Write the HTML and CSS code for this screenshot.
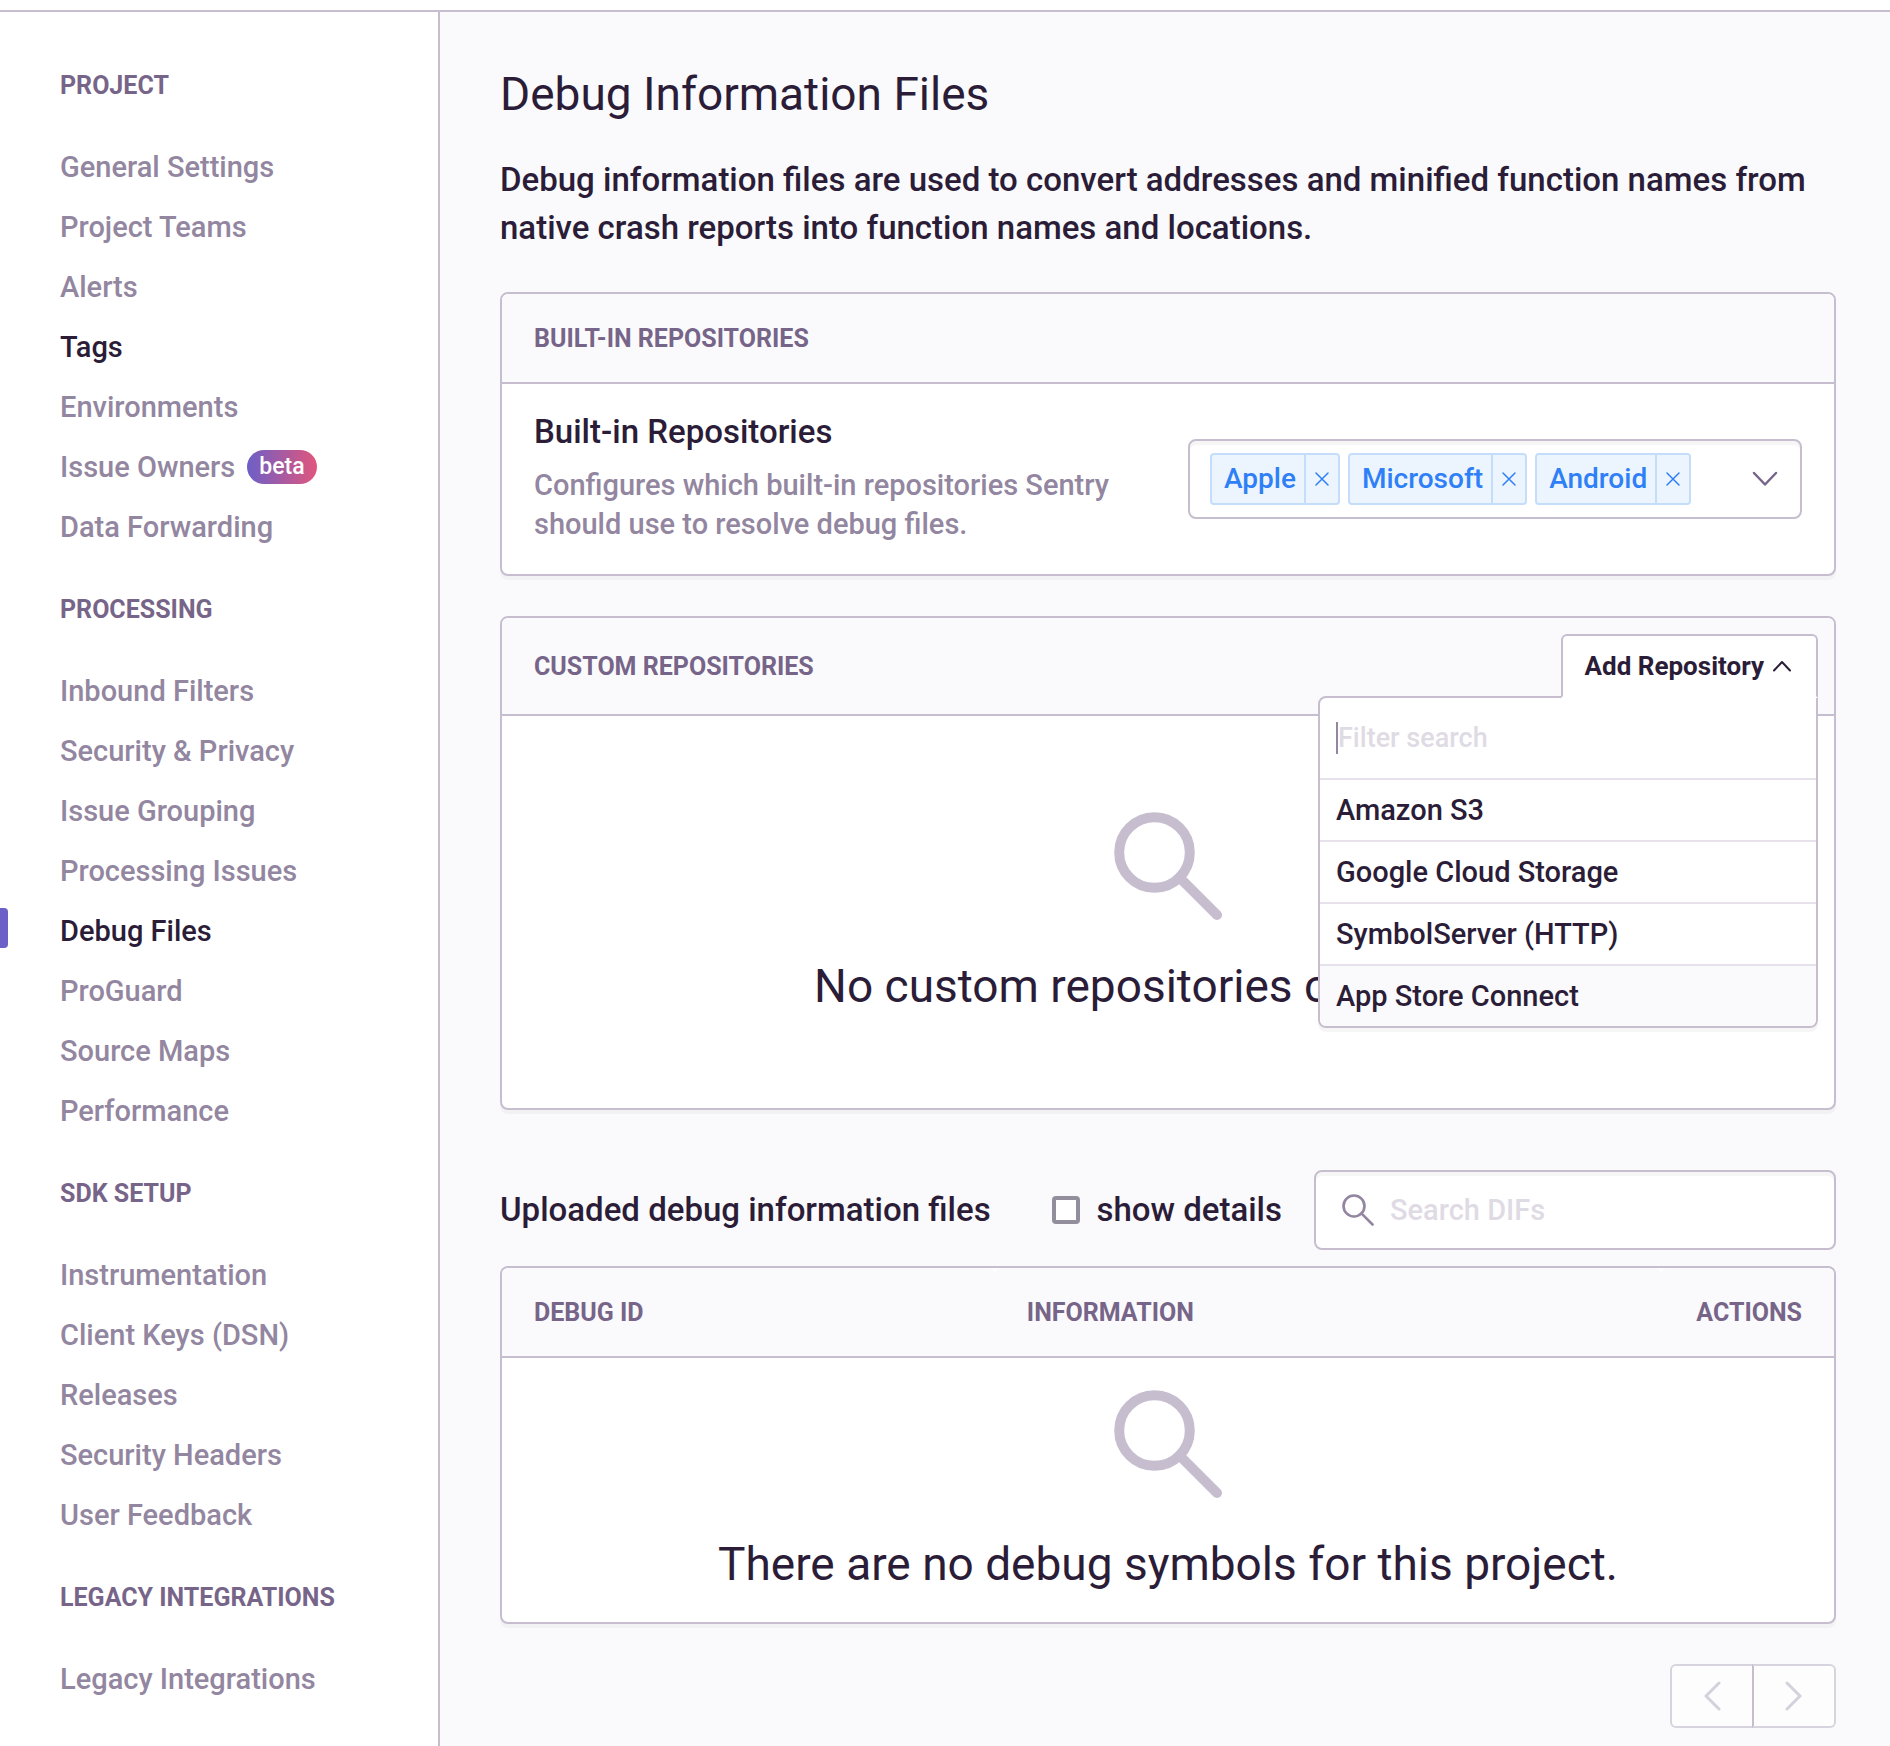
FILE: index.html
```html
<!DOCTYPE html>
<html lang="en">
<head>
<meta charset="utf-8">
<meta name="viewport" content="width=device-width, initial-scale=1">
<title>Debug Information Files</title>
<link rel="stylesheet" href="styles.css">
</head>
<body>
<svg class="sprite" aria-hidden="true">
  <symbol id="icon-search" viewBox="0 0 108 108">
    <circle cx="40.5" cy="40.5" r="35.3"/>
    <path d="M65.500 65.500L103 103"/>
  </symbol>
  <symbol id="icon-close" viewBox="0 0 14 14"><path d="M1 1L13 13M13 1L1 13"/></symbol>
</svg>
<header class="topbar"></header>
<div class="layout">
  <nav class="sidebar" aria-label="Project settings">
    <h2 class="nav-heading">Project</h2>
    <ul class="nav-list">
      <li><a class="nav-link" href="#">General Settings</a></li>
      <li><a class="nav-link" href="#">Project Teams</a></li>
      <li><a class="nav-link" href="#">Alerts</a></li>
      <li><a class="nav-link nav-link-dark" href="#">Tags</a></li>
      <li><a class="nav-link" href="#">Environments</a></li>
      <li><a class="nav-link" href="#">Issue Owners <span class="badge">beta</span></a></li>
      <li><a class="nav-link" href="#">Data Forwarding</a></li>
    </ul>
    <h2 class="nav-heading">Processing</h2>
    <ul class="nav-list">
      <li><a class="nav-link" href="#">Inbound Filters</a></li>
      <li><a class="nav-link" href="#">Security &amp; Privacy</a></li>
      <li><a class="nav-link" href="#">Issue Grouping</a></li>
      <li><a class="nav-link" href="#">Processing Issues</a></li>
      <li><a class="nav-link nav-link-dark nav-link-active" href="#" aria-current="page">Debug Files</a></li>
      <li><a class="nav-link" href="#">ProGuard</a></li>
      <li><a class="nav-link" href="#">Source Maps</a></li>
      <li><a class="nav-link" href="#">Performance</a></li>
    </ul>
    <h2 class="nav-heading">SDK Setup</h2>
    <ul class="nav-list">
      <li><a class="nav-link" href="#">Instrumentation</a></li>
      <li><a class="nav-link" href="#">Client Keys (DSN)</a></li>
      <li><a class="nav-link" href="#">Releases</a></li>
      <li><a class="nav-link" href="#">Security Headers</a></li>
      <li><a class="nav-link" href="#">User Feedback</a></li>
    </ul>
    <h2 class="nav-heading">Legacy Integrations</h2>
    <ul class="nav-list">
      <li><a class="nav-link" href="#">Legacy Integrations</a></li>
    </ul>
  </nav>

  <main class="content">
    <h1 class="title">Debug Information Files</h1>
    <p class="intro">Debug information files are used to convert addresses and minified function names from native crash reports into function names and locations.</p>

    <section class="panel">
      <h2 class="panel-header">Built-in Repositories</h2>
      <div class="field">
        <div class="field-text">
          <h3 class="field-label" id="builtin-label">Built-in Repositories</h3>
          <p class="field-help">Configures which built-in repositories Sentry should use to resolve debug files.</p>
        </div>
        <div class="multiselect" role="group" aria-labelledby="builtin-label">
          <ul class="tags">
            <li class="tag"><span class="tag-label">Apple</span><button class="tag-remove" type="button" aria-label="Remove Apple"><svg class="icon-x"><use href="#icon-close"/></svg></button></li>
            <li class="tag"><span class="tag-label">Microsoft</span><button class="tag-remove" type="button" aria-label="Remove Microsoft"><svg class="icon-x"><use href="#icon-close"/></svg></button></li>
            <li class="tag"><span class="tag-label">Android</span><button class="tag-remove" type="button" aria-label="Remove Android"><svg class="icon-x"><use href="#icon-close"/></svg></button></li>
          </ul>
          <button class="select-toggle" type="button" aria-label="Show repositories"><svg class="icon-down" viewBox="0 0 26 16"><path d="M2 2L13 13.500L24 2"/></svg></button>
        </div>
      </div>
    </section>

    <section class="panel">
      <div class="panel-header panel-header-actions">
        <h2 class="panel-title">Custom Repositories</h2>
        <div class="dropdown">
          <button class="dropdown-button" type="button" aria-expanded="true">Add Repository <svg class="icon-up" viewBox="0 0 20 12"><path d="M2 10.500L10 2L18 10.500"/></svg></button>
          <div class="menu">
            <div class="menu-search"><input class="menu-input" type="text" placeholder="Filter search" aria-label="Filter search"></div>
            <button class="menu-item" type="button">Amazon S3</button>
            <button class="menu-item" type="button">Google Cloud Storage</button>
            <button class="menu-item" type="button">SymbolServer (HTTP)</button>
            <button class="menu-item menu-item-hover" type="button">App Store Connect</button>
          </div>
        </div>
      </div>
      <div class="empty empty-tall">
        <svg class="icon-empty"><use href="#icon-search"/></svg>
        <p class="empty-text">No custom repositories configured</p>
      </div>
    </section>

    <div class="toolbar">
      <h2 class="toolbar-title">Uploaded debug information files</h2>
      <label class="check"><input class="checkbox" type="checkbox">show details</label>
      <label class="search">
        <svg class="icon-search"><use href="#icon-search"/></svg>
        <input class="search-input" type="text" placeholder="Search DIFs" aria-label="Search DIFs">
      </label>
    </div>

    <div class="panel panel-table">
      <table class="table">
        <thead>
          <tr><th class="col-id" scope="col">Debug ID</th><th class="col-info" scope="col">Information</th><th class="col-actions" scope="col">Actions</th></tr>
        </thead>
        <tbody>
          <tr><td colspan="3">
            <div class="empty">
              <svg class="icon-empty"><use href="#icon-search"/></svg>
              <p class="empty-text">There are no debug symbols for this project.</p>
            </div>
          </td></tr>
        </tbody>
      </table>
    </div>

    <div class="pager">
      <button class="pager-button" type="button" aria-label="Previous" disabled><svg class="icon-page" viewBox="0 0 18 30"><path d="M16 2L3 15L16 28"/></svg></button>
      <button class="pager-button" type="button" aria-label="Next" disabled><svg class="icon-page" viewBox="0 0 18 30"><path d="M2 2L15 15L2 28"/></svg></button>
    </div>
  </main>
</div>
</body>
</html>
```

FILE: styles.css
```css
:root {
  --text: #2b1d38;
  --muted: #9386a0;
  --heading: #776589;
  --border: #c6becf;
  --border-light: #e7e1ec;
  --surface: #fafafc;
  --placeholder: #dfdbe4;
  --accent: #6c5fc7;
  --tag-border: #c3ddfb;
}

* { box-sizing: border-box; }

body {
  margin: 0;
  background: #fff;
  color: var(--text);
  font-family: Roboto, "Liberation Sans", sans-serif;
  font-size: 29px;
  font-weight: 500;
  line-height: 40px;
}

h1, h2, h3, p, ul { margin: 0; padding: 0; font-weight: 500; }
ul { list-style: none; }
button, input { font: inherit; color: inherit; margin: 0; }
button { cursor: pointer; }
svg { display: block; fill: none; stroke-linecap: round; stroke-linejoin: round; }
.sprite { position: absolute; width: 0; height: 0; }

.topbar { height: 12px; border-bottom: 2px solid var(--border); }
.layout { display: flex; min-height: calc(100vh - 12px); }

/* Sidebar */
.sidebar {
  flex: none;
  width: 440px;
  padding-top: 21px;
  border-right: 2px solid var(--border);
}
.nav-heading {
  padding: 33px 60px 31px;
  color: var(--heading);
  font-size: 25px;
  font-weight: 700;
  text-transform: uppercase;
}
.nav-link {
  position: relative;
  display: flex;
  align-items: center;
  gap: 12px;
  height: 60px;
  padding: 0 60px;
  color: var(--muted);
  text-decoration: none;
}
.nav-link-dark { color: var(--text); }
.nav-link-active::before {
  content: "";
  position: absolute;
  left: 0;
  top: 7px;
  width: 8px;
  height: 40px;
  border-radius: 0 4px 4px 0;
  background: var(--accent);
}
.badge {
  padding: 0 12px;
  border-radius: 17px;
  background: linear-gradient(90deg, #6c5fc7, #e1567c);
  color: #fff;
  font-size: 23px;
  line-height: 34px;
}

/* Content */
.content {
  flex: 1;
  min-width: 0;
  padding: 56px 54px 16px 60px;
  background: var(--surface);
}
.title { font-size: 46px; font-weight: 400; line-height: 52px; }
.intro { margin: 36px 0 40px; font-size: 33px; line-height: 48px; }

.panel {
  margin-bottom: 40px;
  border: 2px solid var(--border);
  border-radius: 8px;
  background: #fff;
  box-shadow: 0 4px 0 rgba(43, 29, 56, 0.04);
}
.panel-header {
  padding: 25px 32px 23px;
  border-bottom: 2px solid var(--border);
  border-radius: 6px 6px 0 0;
  background: var(--surface);
  color: var(--heading);
  font-size: 25px;
  font-weight: 700;
  text-transform: uppercase;
}
.panel-header-actions {
  display: flex;
  align-items: center;
  justify-content: space-between;
  padding: 16px 16px 16px 32px;
}
.panel-title { padding-top: 2px; font-size: 25px; font-weight: 700; }

.field { display: flex; align-items: center; justify-content: space-between; padding: 30px 32px; }
.field-text { width: 48%; }
.field-label { font-size: 33px; line-height: 36px; }
.field-help { margin-top: 16px; color: var(--muted); line-height: 39px; }

.multiselect {
  display: flex;
  align-items: center;
  justify-content: space-between;
  width: 614px;
  height: 80px;
  padding: 0 20px;
  border: 2px solid var(--border);
  border-radius: 8px;
  box-shadow: inset 0 4px 0 rgba(43, 29, 56, 0.04);
}
.tags { display: flex; gap: 8px; font-size: 28px; }
.tag {
  display: flex;
  height: 52px;
  border: 2px solid var(--tag-border);
  border-radius: 4px;
  background: #ecf5fe;
  color: #2f80f7;
}
.tag-label { padding: 0 8px 0 12px; line-height: 48px; }
.tag-remove {
  display: flex;
  align-items: center;
  justify-content: center;
  width: 34px;
  padding: 0;
  border: 0;
  border-left: 2px solid var(--tag-border);
  background: none;
}
.icon-x { width: 14px; height: 14px; stroke: #2f80f7; stroke-width: 1.5; }
.select-toggle { padding: 0 2px 0 16px; border: 0; background: none; }
.icon-down { width: 26px; height: 16px; stroke: var(--heading); stroke-width: 2.5; }

/* Add repository dropdown */
.dropdown { position: relative; text-transform: none; }
.dropdown-button {
  position: relative;
  z-index: 2;
  display: flex;
  align-items: center;
  gap: 8px;
  height: 64px;
  padding: 0 24px 0 22px;
  border: 2px solid var(--border);
  border-bottom-color: #fff;
  border-radius: 6px 6px 0 0;
  background: #fff;
  color: var(--text);
  font-size: 26px;
  font-weight: 700;
}
.icon-up { width: 20px; height: 12px; stroke: var(--text); stroke-width: 2; }
.menu {
  position: absolute;
  z-index: 1;
  top: 62px;
  right: 0;
  width: 500px;
  border: 2px solid var(--border);
  border-radius: 8px 0 8px 8px;
  background: #fff;
  box-shadow: 0 4px 0 rgba(43, 29, 56, 0.04);
  color: var(--text);
  font-size: 29px;
  font-weight: 500;
}
.menu-search { padding: 24px 16px; }
.menu-input {
  display: block;
  width: 100%;
  height: 32px;
  padding: 0;
  border: 0;
  border-left: 2px solid var(--muted);
  outline: 0;
  background: none;
  font-size: 27px;
}
.menu-item {
  display: block;
  width: 100%;
  padding: 10px 16px;
  border: 0;
  border-top: 2px solid var(--border-light);
  background: none;
  text-align: left;
}
.menu-item-hover { border-radius: 0 0 6px 6px; background: var(--surface); }
::placeholder { color: var(--placeholder); opacity: 1; }

/* Empty states */
.empty { display: flex; flex-direction: column; align-items: center; gap: 40px; padding: 32px; }
.empty-tall { padding: 96px 32px; }
.icon-empty { width: 108px; height: 108px; stroke: var(--border); stroke-width: 10; }
.empty-text { font-size: 46px; font-weight: 400; line-height: 52px; text-align: center; }

/* Toolbar above the files table */
.toolbar { display: flex; align-items: center; margin: 60px 0 16px; font-size: 33px; }
.toolbar-title { flex: 1; font-size: 33px; }
.check { display: flex; align-items: center; gap: 16px; margin-right: 32px; }
.checkbox {
  appearance: none;
  width: 28px;
  height: 28px;
  margin: 0;
  border: 4px solid #928e9c;
  border-radius: 4px;
  background: #fff;
}
.search {
  display: flex;
  align-items: center;
  gap: 16px;
  width: 522px;
  height: 80px;
  padding: 0 26px;
  border: 2px solid var(--border);
  border-radius: 8px;
  background: #fff;
  box-shadow: inset 0 4px 0 rgba(43, 29, 56, 0.04);
}
.icon-search { flex: none; width: 32px; height: 32px; stroke: var(--muted); stroke-width: 9; }
.search-input { flex: 1; min-width: 0; padding: 0; border: 0; outline: 0; background: none; font-size: 29px; }

/* Files table */
.table { width: 100%; border-collapse: separate; border-spacing: 0; table-layout: fixed; }
th {
  padding: 25px 32px 23px;
  border-bottom: 2px solid var(--border);
  border-radius: 6px 6px 0 0;
  background: var(--surface);
  color: var(--heading);
  font-size: 25px;
  font-weight: 700;
  text-align: left;
  text-transform: uppercase;
}
td { padding: 0; }
.col-id { width: 37%; }
.col-info { width: 50%; }
.table .col-actions { padding-left: 0; text-align: right; }

/* Pager */
.pager { display: flex; justify-content: flex-end; }
.pager-button {
  display: flex;
  align-items: center;
  justify-content: center;
  width: 84px;
  height: 64px;
  padding: 0;
  border: 2px solid #d8d4df;
  background: #fdfdfe;
}
.pager-button:first-child { border-radius: 6px 0 0 6px; }
.pager-button:last-child { margin-left: -2px; border-left-color: var(--border); border-radius: 0 6px 6px 0; }
.icon-page { width: 18px; height: 30px; stroke: #d5d1dc; stroke-width: 3; }
```
